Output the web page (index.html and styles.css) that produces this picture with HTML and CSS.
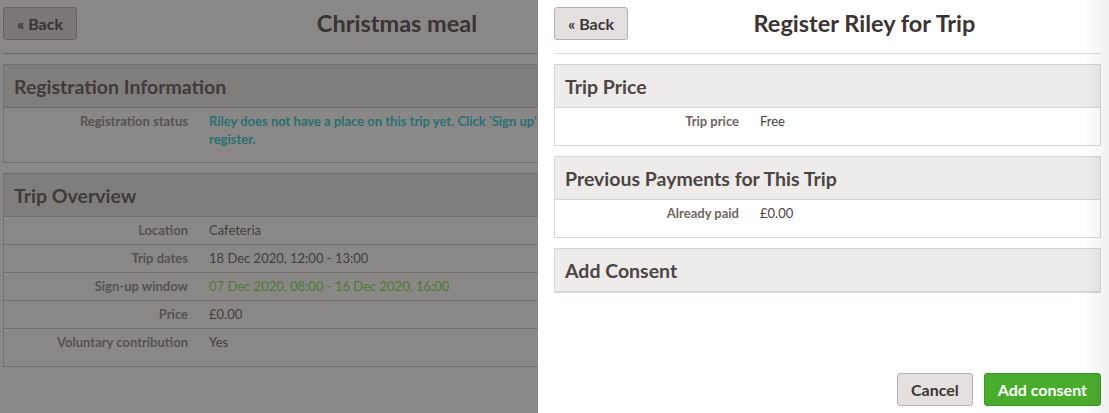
FILE: index.html
```html
<!DOCTYPE html>
<html lang="en">
<head>
<meta charset="utf-8">
<title>Register Riley for Trip</title>
<link rel="stylesheet" href="styles.css">
</head>
<body>
<div class="page">
  <header class="page-head">
    <button class="btn bg-btn" type="button">« Back</button>
    <h1 class="page-title">Christmas meal</h1>
  </header>
  <section class="card bg-card">
    <h2 class="card-h">Registration Information</h2>
    <div class="card-b">
      <div class="row">
        <div class="lbl">Registration status</div>
        <div class="val notice">Riley does not have a place on this trip yet. Click 'Sign up' to<br>register.</div>
      </div>
    </div>
  </section>
  <section class="card bg-card">
    <h2 class="card-h">Trip Overview</h2>
    <div class="card-b">
      <div class="row"><div class="lbl">Location</div><div class="val">Cafeteria</div></div>
      <div class="row"><div class="lbl">Trip dates</div><div class="val">18 Dec 2020, 12:00 - 13:00</div></div>
      <div class="row"><div class="lbl">Sign-up window</div><div class="val open">07 Dec 2020, 08:00 - 16 Dec 2020, 16:00</div></div>
      <div class="row"><div class="lbl">Price</div><div class="val">£0.00</div></div>
      <div class="row"><div class="lbl">Voluntary contribution</div><div class="val">Yes</div></div>
    </div>
  </section>
</div>

<div class="backdrop"></div>

<aside class="panel">
  <header class="page-head">
    <button class="btn" type="button">« Back</button>
    <h1 class="panel-title">Register Riley for Trip</h1>
  </header>
  <section class="card">
    <h2 class="card-h">Trip Price</h2>
    <div class="card-b">
      <div class="row"><div class="lbl">Trip price</div><div class="val">Free</div></div>
    </div>
  </section>
  <section class="card">
    <h2 class="card-h">Previous Payments for This Trip</h2>
    <div class="card-b">
      <div class="row"><div class="lbl">Already paid</div><div class="val">£0.00</div></div>
    </div>
  </section>
  <section class="card">
    <h2 class="card-h">Add Consent</h2>
  </section>
  <footer class="panel-foot">
    <button class="btn" type="button">Cancel</button>
    <button class="btn btn-go" type="button">Add consent</button>
  </footer>
</aside>
</body>
</html>
```

FILE: styles.css
```css
* { box-sizing: border-box; }

html, body {
  margin: 0;
  height: 100%;
}

body {
  font-family: Lato, "Open Sans", sans-serif;
  background: #fffbfa;
  color: #4a4342;
  overflow: hidden;
}

/* ---------- background page ---------- */
.page {
  width: 720px;
  padding: 7px 3px;
}

.page-head {
  display: flex;
  align-items: center;
  padding-bottom: 13px;
  border-bottom: 1px solid #dcdad9;
  margin-bottom: 10px;
}

.page-title,
.panel-title {
  flex: 1;
  margin: 0;
  text-align: center;
  font-size: 23.5px;
  font-weight: 700;
  line-height: 33px;
  color: #3b3433;
}

.btn {
  height: 33px;
  padding: 0 13px;
  border: 1px solid #b7b2b1;
  border-radius: 3px;
  background: #e4e0df;
  color: #3d3635;
  font-family: inherit;
  font-size: 16px;
  font-weight: 700;
  line-height: 31px;
  cursor: pointer;
}

.card {
  border: 1px solid #d9d6d5;
  margin-bottom: 10px;
}

.card-h {
  margin: 0;
  height: 43px;
  padding: 0 10px;
  border-bottom: 1px solid #d9d6d5;
  background: #eeeceb;
  font-size: 19.5px;
  font-weight: 700;
  line-height: 43px;
  color: #4d4544;
}

.card-b {
  padding-bottom: 10px;
}

.row {
  display: flex;
  gap: 21px;
  padding: 4px 0;
  font-size: 13px;
  line-height: 19px;
}

.row + .row {
  border-top: 1px solid #e3e0df;
}

.lbl {
  flex: 0 0 184px;
  text-align: right;
  font-weight: 700;
  color: #6e6563;
}

.val {
  flex: 1;
  color: #4a4342;
}

/* colours of the page under the backdrop */
.page .page-head { border-bottom-color: #c9c2c0; }
.page .page-title { color: #6a6262; }
.bg-btn { background: #e2dcdb; border-color: #beb6b5; color: #686060; }
.bg-card { border-color: #d3cbca; }
.bg-card .card-h { background: #ede8e7; border-bottom-color: #d3cbca; color: #776f6e; }
.bg-card .row + .row { border-top-color: #d3cbca; }
.bg-card .lbl { color: #a19896; }
.bg-card .val { color: #7d7574; }
.bg-card .val.notice { color: #4ad2d6; font-weight: 700; line-height: 18px; }
.bg-card .val.open { color: #8ee660; }

.backdrop {
  position: fixed;
  inset: 0;
  background: rgba(0, 0, 0, 0.46);
}

/* ---------- slide-in panel ---------- */
.panel {
  position: fixed;
  top: 0;
  right: 0;
  bottom: 0;
  width: 571px;
  display: flex;
  flex-direction: column;
  padding: 7px 8px 7px 16px;
  background: #ffffff;
}

.panel::after {
  content: "";
  position: absolute;
  top: 0;
  right: 0;
  bottom: 0;
  width: 26px;
  background: linear-gradient(to right, rgba(0, 0, 0, 0), rgba(0, 0, 0, 0.06));
  pointer-events: none;
}

.panel-foot {
  margin-top: auto;
  display: flex;
  justify-content: flex-end;
  gap: 11px;
}

.btn-go {
  background: #47ad2b;
  border-color: #3b9625;
  color: #ffffff;
}
```
